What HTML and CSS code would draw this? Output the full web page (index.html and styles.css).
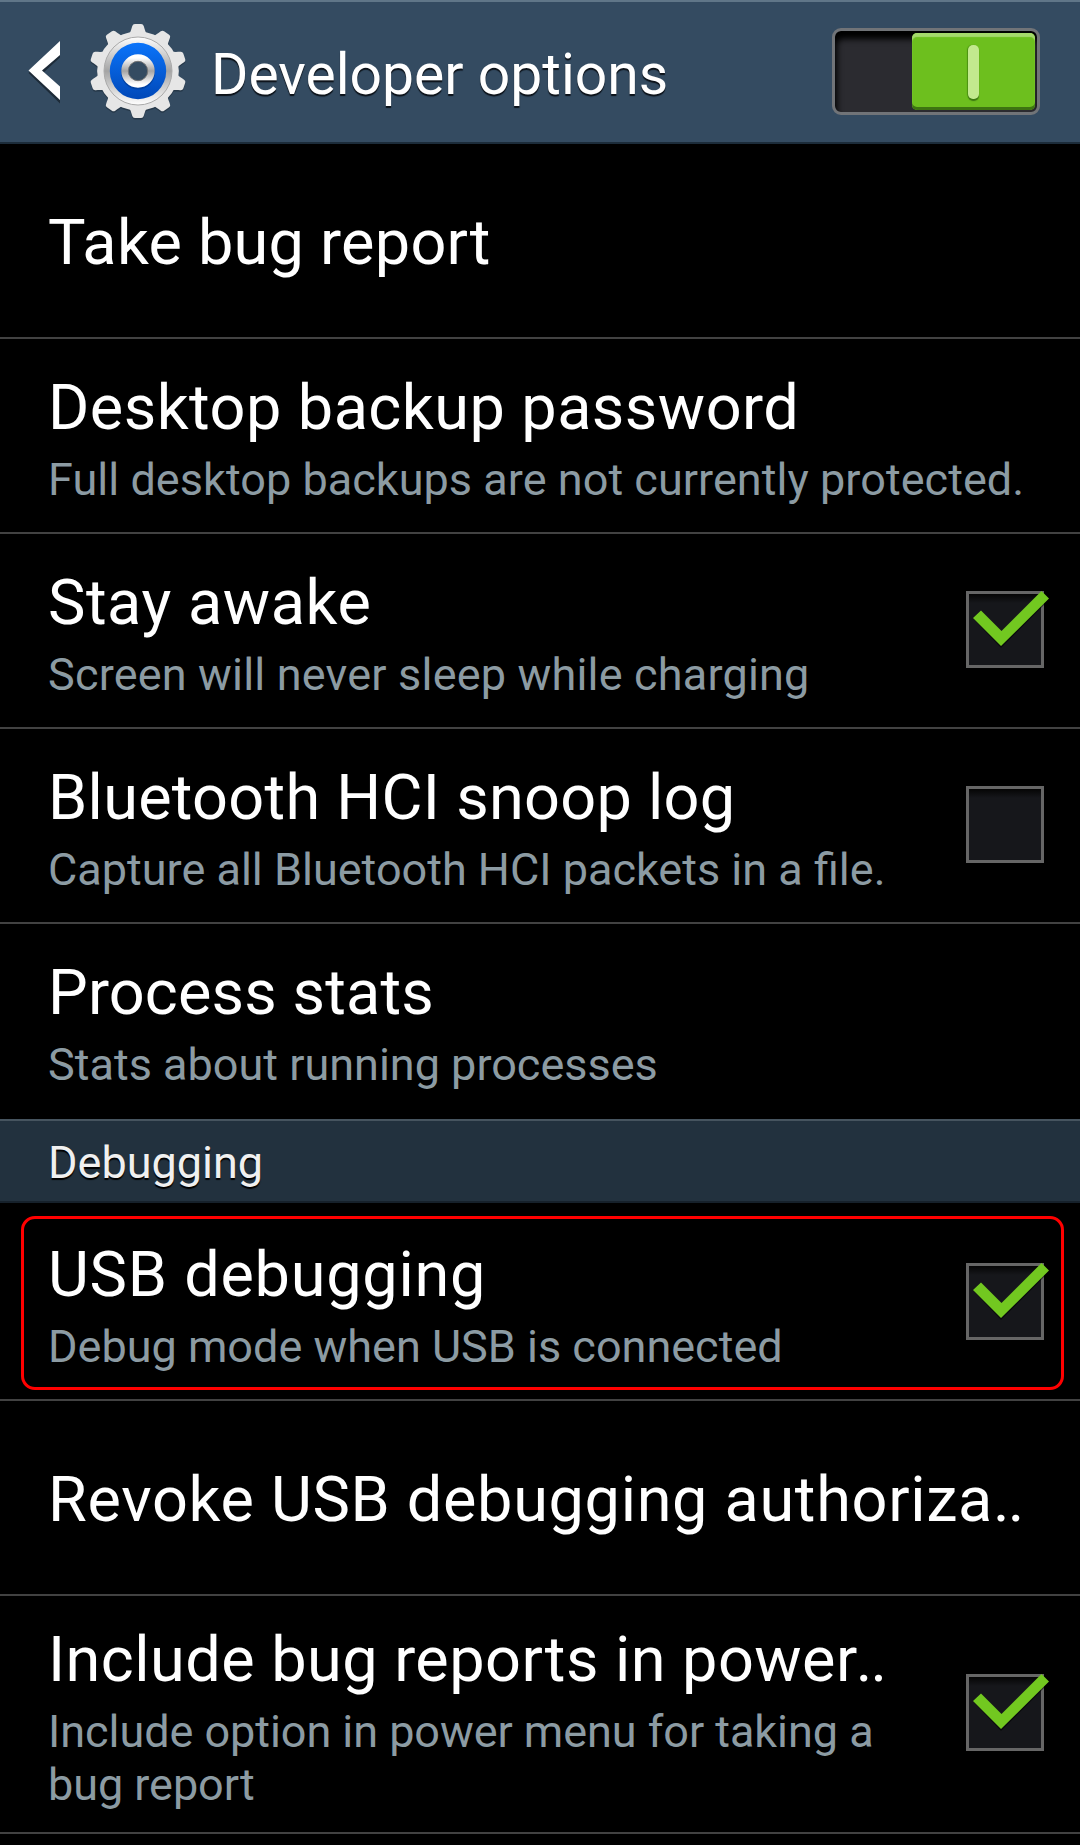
FILE: index.html
```html
<!DOCTYPE html>
<html lang="en">
<head>
<meta charset="utf-8">
<title>Developer options</title>
<link rel="stylesheet" href="styles.css">
</head>
<body>
<svg class="defs" aria-hidden="true">
  <defs>
    <symbol id="tick" viewBox="0 0 90 90">
      <path d="M8 26.500 15 19.500 35.500 40 76 0 83 7 35 55Z" fill="#000" opacity=".55" transform="translate(0 2)"/>
      <path d="M7 27 15 19.500 35.500 40 75.500 0 83 7.500 35 55Z" fill="#72c820"/>
    </symbol>
    <linearGradient id="rim" x1="0" y1="0" x2="0" y2="1"><stop offset="0" stop-color="#fff"/><stop offset=".5" stop-color="#a4a4a4"/><stop offset="1" stop-color="#fff"/></linearGradient>
    <linearGradient id="blue" x1="0" y1="0" x2="0" y2="1"><stop offset="0" stop-color="#0b74fa"/><stop offset="1" stop-color="#0048b8"/></linearGradient>
  </defs>
</svg>

<header class="bar">
  <svg class="back" width="34" height="64" viewBox="0 0 34 64"><path d="M32 2V16L15 31.500 32 47.500V62L0.500 31.500Z" fill="#1d2b38" transform="translate(0 1.500)"/><path d="M32 1V15L14 30.500 32 46.500V60L0.500 30.500Z" fill="#fff"/></svg>
  <svg class="gear" width="98" height="98" viewBox="-49 -49 98 98">
    <defs>
      <path id="tooth" d="M-9-36C-7-39-6.500-42-5.500-45Q-5-47-3-47H3Q5-47 5.500-45C6.500-42 7-39 9-36L8-25H-8Z"/>
      <g id="cog" transform="scale(1.035 1)">
        <circle r="39.500"/>
        <use href="#tooth"/><use href="#tooth" transform="rotate(36)"/><use href="#tooth" transform="rotate(72)"/><use href="#tooth" transform="rotate(108)"/><use href="#tooth" transform="rotate(144)"/><use href="#tooth" transform="rotate(180)"/><use href="#tooth" transform="rotate(216)"/><use href="#tooth" transform="rotate(252)"/><use href="#tooth" transform="rotate(288)"/><use href="#tooth" transform="rotate(324)"/>
      </g>
    </defs>
    <use href="#cog" fill="#1d2c3a" opacity=".6" transform="translate(0 1.500)"/>
    <use href="#cog" fill="#e6e6e6"/>
    <circle r="34" fill="url(#rim)" stroke="#aaa"/>
    <circle r="28.200" fill="url(#blue)"/>
    <circle r="17" cy="1.500" fill="#003a94" opacity=".7"/>
    <circle r="13.200" fill="#344b61" stroke="url(#rim)" stroke-width="7"/>
    <circle r="9.700" fill="#344b61" stroke="#777"/>
  </svg>
  <h1 class="bar-title">Developer options</h1>
  <div class="switch"><div class="thumb"><span class="mark"></span></div></div>
</header>

<main class="list">
  <div class="row single bugreport"><div class="text"><div class="title">Take bug report</div></div></div>
  <div class="row backup"><div class="text"><div class="title">Desktop backup password</div><div class="summary">Full desktop backups are not currently protected.</div></div></div>
  <div class="row awake"><div class="text"><div class="title">Stay awake</div><div class="summary">Screen will never sleep while charging</div></div><div class="check"><svg class="tick"><use href="#tick"/></svg></div></div>
  <div class="row snoop"><div class="text"><div class="title">Bluetooth HCI snoop log</div><div class="summary">Capture all Bluetooth HCI packets in a file.</div></div><div class="check"></div></div>
  <div class="row last stats"><div class="text"><div class="title">Process stats</div><div class="summary">Stats about running processes</div></div></div>
  <h2 class="section">Debugging</h2>
  <div class="row marked"><div class="text"><div class="title">USB debugging</div><div class="summary">Debug mode when USB is connected</div></div><div class="check"><svg class="tick"><use href="#tick"/></svg></div></div>
  <div class="row single revoke"><div class="text"><div class="title">Revoke USB debugging authoriza<span class="dots">..</span></div></div></div>
  <div class="row tall"><div class="text"><div class="title">Include bug reports in power<span class="dots">..</span></div><div class="summary">Include option in power menu for taking a<br>bug report</div></div><div class="check"><svg class="tick"><use href="#tick"/></svg></div></div>
</main>
</body>
</html>
```
FILE: styles.css
```css
*, *::after { box-sizing: border-box; }
body { margin: 0; height: 1845px; overflow: hidden; background: #000; color: #fff; font-family: Roboto, sans-serif; }
.defs { position: absolute; width: 0; height: 0; }

.bar { display: flex; align-items: center; height: 144px; padding: 0 40px 0 28px; background: #344b61; border-top: 2px solid #607688; border-bottom: 2px solid #1c2c3a; }
.back { flex: none; }
.gear { flex: none; margin: 0 0 2px 27px; }
.bar-title { flex: 1; margin: 5px 0 0 24px; font-size: 57px; line-height: 68px; font-weight: 400; white-space: nowrap; text-shadow: 0 2px 1px #0b1118; }
.switch { display: flex; justify-content: flex-end; width: 208px; height: 87px; margin-bottom: 1px; border: 3px solid #717478; border-radius: 9px; background: #2b2b30; box-shadow: inset 2px 8px 6px #000; padding: 2px; }
.thumb { display: flex; align-items: center; justify-content: center; width: 123px; height: 77px; border-radius: 5px; background: #6dbf1e; box-shadow: inset 0 4px 1px #a5d96c, inset 0 -3px 0 #3d7411; }
.mark { width: 11px; height: 54px; border-radius: 5px; background: #c2e98e; box-shadow: 0 2px 1px #3c7810, -1px 0 1px #4d9412; }

.row { position: relative; display: flex; align-items: center; height: 195px; padding: 0 36px 0 48px; border-bottom: 2px solid #424242; }
.row.last { border-bottom-color: #000; }
.row.marked { height: 198px; padding-top: 3px; }
.row.tall { height: 238px; }
.row.marked::after { content: ""; position: absolute; left: 21px; right: 16px; top: 13px; height: 174px; border: 3px solid #f00; border-radius: 14px; }
.text { flex: 1; min-width: 0; padding-top: 6px; white-space: nowrap; }
.single .text { padding-top: 4px; }
.title { font-size: 63px; line-height: 74px; }
.summary { margin-top: 8px; font-size: 45px; line-height: 53px; color: #8c9ba3; }
.check { position: relative; flex: none; width: 78px; height: 77px; margin-bottom: 2px; border: 3px solid #666; background: linear-gradient(#050505, #16171b 9px); }
.tall .check { margin-bottom: 4px; }
.tick { position: absolute; left: -3px; top: -3px; width: 90px; height: 90px; }

/* Tracking per entry */
.bugreport .title { letter-spacing: .25px; }
.backup .title { letter-spacing: .46px; }
.backup .summary { letter-spacing: .04px; }
.awake .title { letter-spacing: .55px; }
.awake .summary { letter-spacing: .18px; }
.snoop .title { letter-spacing: .28px; }
.stats .title { letter-spacing: .14px; }
.marked .title { letter-spacing: .75px; }
.revoke .title { letter-spacing: .68px; }
.tall .title { letter-spacing: .46px; }
.title .dots { letter-spacing: -2px; }
.tall .title .dots { margin-left: -2px; }
.tall .summary { letter-spacing: -.05px; }

.section { margin: 0; height: 84px; padding: 10px 48px 0; background: #22313e; border-top: 2px solid #46545f; border-bottom: 2px solid #16212b; font-size: 45px; line-height: 64px; font-weight: 400; color: #f0f0f0; text-shadow: 0 2px 1px #000; }
```
